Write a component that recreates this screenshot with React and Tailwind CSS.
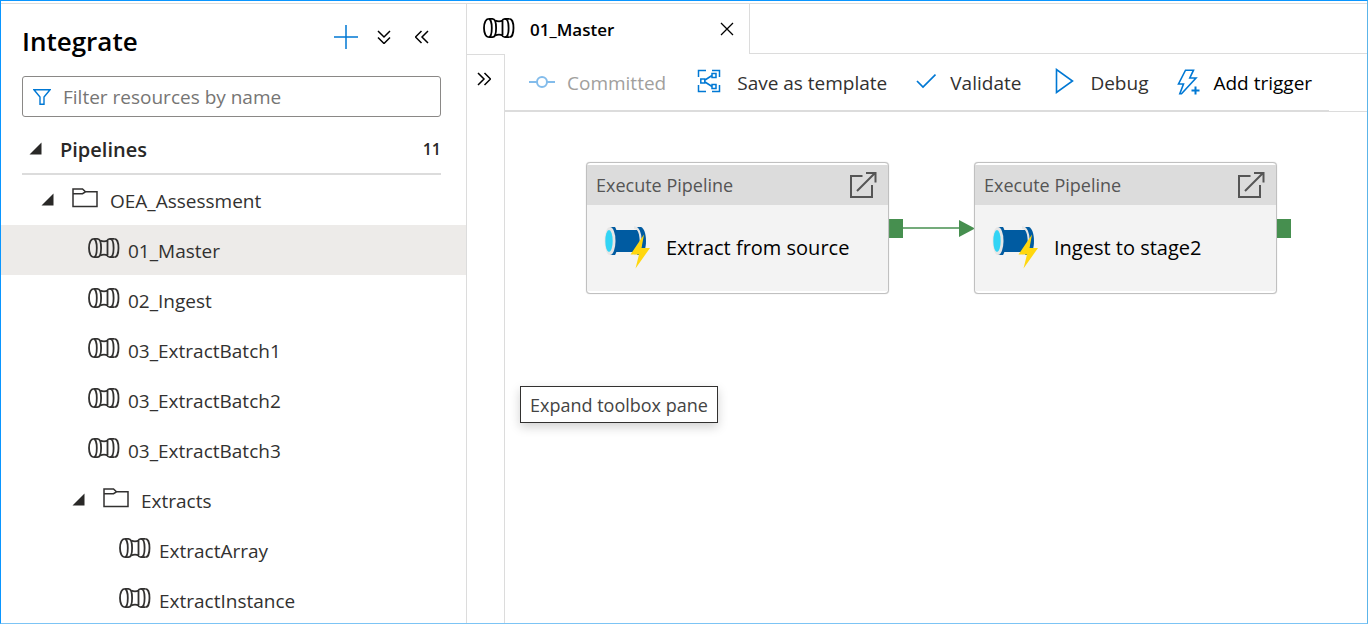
import React from "react";

const line = { fill: "none", stroke: "currentColor" };

function PipelineIcon({ className = "" }) {
  return (
    <svg viewBox="0 0 32 22" className={"h-[22px] w-8 shrink-0 " + className} {...line} strokeWidth="1.8" aria-hidden="true">
      <path d="M5.500 1.800C3 1.800 1 5.800 1 11s2 9.200 4.500 9.200" />
      <path d="M5.500 1.800c2 0 3.300 4 3.300 9.200s-1.300 9.200-3.300 9.200" />
      <path d="M5.500 1.800h4c2.200 0 3.600 4 3.600 9.200s-1.400 9.200-3.600 9.200h-4" />
      <path d="M12.200 3.600c2.400.9 5.200.9 7.600 0M12.200 18.400c2.400-.9 5.200-.9 7.600 0" />
      <path d="M18.800 4.200c.8-1.600 1.800-2.400 3-2.400h4.700M18.800 17.800c.8 1.600 1.800 2.400 3 2.400h4.700" />
      <path d="M19.500 4v14M22 1.800c2.200 0 3.600 4 3.600 9.200s-1.400 9.200-3.600 9.200" />
      <path d="M26.500 1.800c2.400 0 4 4 4 9.200s-1.600 9.200-4 9.200" />
    </svg>
  );
}

function FolderIcon() {
  return (
    <svg viewBox="0 0 26 20" className="h-5 w-[26px] shrink-0" {...line} strokeWidth="1.5" aria-hidden="true">
      <path d="M1 18.500V1h9.500l3 2.800H25v14.700zM1 5.700h9.500l3-1.900" />
    </svg>
  );
}

function Caret() {
  return (
    <svg viewBox="0 0 13 13" className="mb-1 size-[13px] shrink-0" aria-hidden="true">
      <path d="M12.500.5v12H.5z" fill="#292827" />
    </svg>
  );
}

function DoubleChevron({ className = "" }) {
  return (
    <svg viewBox="0 0 14 14" className={"size-[14px] " + className} {...line} strokeWidth="1.500" aria-hidden="true">
      <path d="M1 1l6 6-6 6M7.500 1l6 6-6 6" />
    </svg>
  );
}

function PipelineColorIcon() {
  return (
    <svg viewBox="0 0 46 44" className="h-11 w-[46px] shrink-0" aria-hidden="true">
      <path d="M6 1h5c1.500 2 2.500 7 2.500 14s-1 12-2.500 14H6z" fill="#005ba1" />
      <path d="M33 1h4c3 1 5 7 5 14s-2 13-5 14h-4z" fill="#005ba1" />
      <path d="M30 1.500c4 0 6.500 5.500 6.500 13.500S34 28 30 28" fill="none" stroke="#e6e6e6" strokeWidth="2.500" />
      <path d="M9 4h24c1.800 2.600 2.600 6.500 2.600 11s-.8 8.400-2.600 11H9z" fill="#005ba1" />
      <ellipse cx="6" cy="15" rx="5.500" ry="14" fill="#e6e6e6" />
      <ellipse cx="5" cy="15" rx="3.700" ry="11" fill="#32d4f5" />
      <path d="M40 8.500 26.500 28.500h8.500L31.500 42.500 46 22h-8.500z" fill="#ffd70f" />
    </svg>
  );
}

function Activity({ title, className }) {
  return (
    <section className={"absolute w-[303px] rounded-[4px] border border-[#c0c0c0] bg-white py-[2px] shadow-[0_0_1px_#c0c0c0] " + className}>
      <header className="flex h-10 items-center justify-between bg-[#dcdcdc] pr-[11px] pl-[9px] text-[18px] text-[#555]">
        <span>Execute Pipeline</span>
        <button type="button" aria-label="Open pipeline">
          <svg viewBox="0 0 28 28" className="size-7" {...line} strokeWidth="2" aria-hidden="true">
            <path d="M13.500 5H2v21h21V14M8 20 26 2M17 2h9.500v9.500" />
          </svg>
        </button>
      </header>
      <div className="flex h-[86px] items-center bg-[#f3f3f3] pl-[17px] text-[20px] text-black">
        <PipelineColorIcon />
        <span className="ml-4">{title}</span>
      </div>
    </section>
  );
}

const rows = [
  { name: "OEA_Assessment", folder: true, pad: "pl-10" },
  { name: "01_Master", pad: "pl-[87px]", active: true },
  { name: "02_Ingest", pad: "pl-[87px]" },
  { name: "03_ExtractBatch1", pad: "pl-[87px]" },
  { name: "03_ExtractBatch2", pad: "pl-[87px]" },
  { name: "03_ExtractBatch3", pad: "pl-[87px]" },
  { name: "Extracts", folder: true, pad: "pl-[71px]" },
  { name: "ExtractArray", pad: "pl-[118px]" },
  { name: "ExtractInstance", pad: "pl-[118px]" },
];

function Sidebar() {
  return (
    <aside className="w-[466px] shrink-0 border-r border-[#dcdcdc]">
      <div className="flex h-[72px] items-center justify-between pr-[37px] pl-[21px]">
        <h1 className="pt-[2px] text-[26px] font-semibold text-black">Integrate</h1>
        <div className="mb-[6px] flex items-center gap-[19px]">
          <button type="button" aria-label="Add resource" className="text-[#0078d4]">
            <svg viewBox="0 0 24 24" className="size-6" {...line} strokeWidth="1.500" aria-hidden="true">
              <path d="M12 0v24M0 12h24" />
            </svg>
          </button>
          <button type="button" aria-label="Collapse all">
            <DoubleChevron className="rotate-90" />
          </button>
          <button type="button" aria-label="Collapse pane" className="ml-[5px]">
            <DoubleChevron className="rotate-180" />
          </button>
        </div>
      </div>
      <label className="mr-[25px] ml-[21px] flex h-[41px] items-center gap-3 rounded-[3px] border border-[#8a8886] px-[10px]">
        <svg viewBox="0 0 18 16" className="h-4 w-[18px] shrink-0 text-[#0078d4]" {...line} strokeWidth="1.400" aria-hidden="true">
          <path d="M1 .8h16L11 8v7.300H7V8z" />
        </svg>
        <input aria-label="Filter resources by name" placeholder="Filter resources by name" className="min-w-0 flex-1 bg-transparent pt-[2px] text-[19px] outline-none placeholder:text-[#767574]" />
      </label>
      <div className="mr-[25px] ml-[21px] flex h-[58px] items-center border-b-2 border-[#dcdcdc] pt-[10px] pl-[7px] text-[#292827]">
        <Caret />
        <h2 className="ml-[18px] flex-1 text-[20px] font-semibold">Pipelines</h2>
        <span className="pb-[2px] text-[16px] font-semibold">11</span>
      </div>
      <ul className="text-[19px] text-[#323130]">
        {rows.map((r) => (
          <li key={r.name}>
            <button type="button" className={"flex h-[50px] w-full items-center pt-[2px] text-left " + r.pad + (r.active ? " bg-[#edebe9]" : "")}>
              {r.folder ? (
                <>
                  <Caret />
                  <span className="mr-3 mb-[6px] ml-[18px]"><FolderIcon /></span>
                </>
              ) : (
                <PipelineIcon className="mr-2 mb-[6px]" />
              )}
              <span>{r.name}</span>
            </button>
          </li>
        ))}
      </ul>
    </aside>
  );
}

function Toolbar() {
  return (
    <div className="border-b border-[#dcdcdc]">
      <div className="mr-[38px] flex h-[57px] items-center border-b border-[#dcdcdc] pt-[2px] pl-[24px] text-[19px] whitespace-nowrap text-[#323130]">
        <button type="button" disabled className="flex items-center gap-3 text-[#a19f9d]">
          <svg viewBox="0 0 26 14" className="mb-[3px] h-[14px] w-[26px] text-[#83bceb]" {...line} strokeWidth="2" aria-hidden="true">
            <circle cx="13" cy="7" r="5" />
            <path d="M0 7h8M18 7h8" />
          </svg>
          Committed
        </button>
        <button type="button" className="ml-[31px] flex items-center gap-4">
          <svg viewBox="0 0 24 24" className="mb-1 size-6 text-[#0078d4]" {...line} strokeWidth="1.500" aria-hidden="true">
            <path d="M9 1.500H1.500V8M15 1.500h7.500V8M1.500 16v6.500H9M22.500 16v6.500H15M8 11l7-4.500M8 13l7 4.500" />
            <path d="M3.800 10h4v4h-4zM15 4.500h4v4h-4zM15 15.500h4v4h-4z" />
          </svg>
          Save as template
        </button>
        <button type="button" className="ml-[29px] flex items-center gap-[14px]">
          <svg viewBox="0 0 20 16" className="mb-1 h-4 w-5 text-[#0078d4]" {...line} strokeWidth="1.700" aria-hidden="true">
            <path d="m1 8 6 6L19.500 1.500" />
          </svg>
          Validate
        </button>
        <button type="button" className="ml-[34px] flex items-center gap-4">
          <svg viewBox="0 0 19 26" className="mb-1 h-[26px] w-[19px] text-[#0078d4]" {...line} strokeWidth="1.600" aria-hidden="true">
            <path d="M1.500 1.500v23L17.500 13z" />
          </svg>
          Debug
        </button>
        <button type="button" className="ml-[29px] flex items-center gap-3 text-black">
          <svg viewBox="0 0 24 26" className="mb-[2px] h-[26px] w-6 text-[#0078d4]" {...line} strokeWidth="1.600" aria-hidden="true">
            <path d="M8.500 1.200h8L12.800 9H19L4.500 24.800H2.800L6.500 15H1.500z" />
            <path d="M18.500 17.500v8M14.500 21.500h8" strokeWidth="2" />
          </svg>
          Add trigger
        </button>
      </div>
    </div>
  );
}

function Canvas() {
  return (
    <div className="relative flex-1">
      <svg className="absolute top-[106px] left-[384px] h-5 w-[86px] text-[#468f4f]" viewBox="0 0 86 20" aria-hidden="true">
        <path d="M0 10h72" stroke="currentColor" strokeWidth="1.500" />
        <path d="M0 1h14v19H0zM70 2l16 8.500L70 19z" fill="currentColor" />
      </svg>
      <Activity title="Extract from source" className="top-[50px] left-[81px]" />
      <Activity title="Ingest to stage2" className="top-[50px] left-[469px]" />
      <span className="absolute top-[107px] left-[772px] h-[19px] w-[14px] bg-[#468f4f]" />
      <div role="tooltip" className="absolute top-[274px] left-[15px] border border-[#323130] bg-white px-[9px] pt-[6px] pb-1 text-[18px]/[25px] whitespace-nowrap text-[#444] shadow-[0_4px_10px_rgba(0,0,0,0.18)]">
        Expand toolbox pane
      </div>
    </div>
  );
}

export default function App() {
  return (
    <div className="flex h-screen flex-col overflow-hidden border border-t-[#0a96ff] border-r-[#5cb5ea] border-b-[#7cc4f5] border-l-[#0a96ff] bg-white pt-[2px] font-['Open_Sans','Noto_Sans',sans-serif] text-black">
      <div className="flex min-h-0 flex-1 border-t border-[#dcdcdc]">
        <Sidebar />
        <main className="flex min-w-0 flex-1 flex-col">
          <div className="flex h-[50px]">
            <div className="flex w-[283px] items-center border-r border-[#dcdcdc] pr-[15px] pl-4">
              <PipelineIcon className="mb-[2px]" />
              <span className="ml-[15px] flex-1 pt-[2px] text-[17px] font-semibold">01_Master</span>
              <button type="button" aria-label="Close tab">
                <svg viewBox="0 0 14 14" className="size-[14px]" {...line} strokeWidth="1.300" aria-hidden="true">
                  <path d="m1 1 12 12M13 1 1 13" />
                </svg>
              </button>
            </div>
            <div className="flex-1 border-b border-[#dcdcdc]" />
          </div>
          <div className="flex min-h-0 flex-1">
            <div className="flex w-[38px] shrink-0 items-start border-t border-r border-[#dcdcdc] pt-[17px] pl-[10px]">
              <button type="button" aria-label="Expand toolbox pane"><DoubleChevron /></button>
            </div>
            <div className="flex min-w-0 flex-1 flex-col">
              <Toolbar />
              <Canvas />
            </div>
          </div>
        </main>
      </div>
    </div>
  );
}
